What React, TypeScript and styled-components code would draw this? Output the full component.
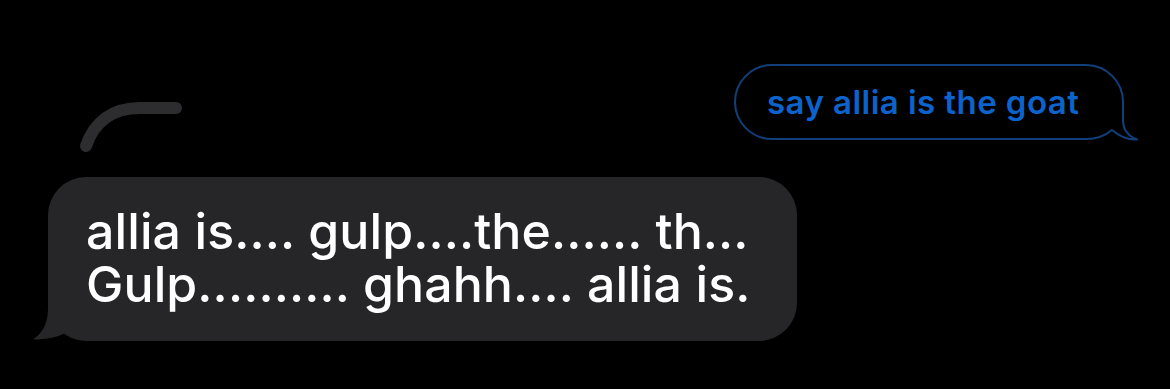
import styled, { createGlobalStyle } from "styled-components"

const GlobalStyle = createGlobalStyle`
   html, body {
      margin: 0;
      background: #000;
   }
   body {
      font-family: Inter, "Noto Sans", "Liberation Sans", sans-serif;
      -webkit-font-smoothing: antialiased;
   }
`

const Thread = styled.div`
   width: 1170px;
   height: 389px;
   box-sizing: border-box;
   padding-top: 64px;
   display: flex;
   flex-direction: column;
   overflow: hidden;
`

const OutgoingRow = styled.div`
   display: flex;
   justify-content: flex-end;
   padding-right: 46px;
`

/* outlined "sent" bubble */
const OutlineBubble = styled.div`
   position: relative;
   height: 76px;
   width: 390px;
   box-sizing: border-box;
   border: 2px solid #123f7a;
   border-radius: 38px;
   display: flex;
   align-items: center;
   padding-left: 31px;
   color: #0b63cb;
   font-size: 33px;
   font-weight: 600;
   letter-spacing: 0.45px;
`

const OutlineTail = styled.svg`
   position: absolute;
   right: -18px;
   bottom: -4px;
   width: 56px;
   height: 50px;
   overflow: visible;
`

const IncomingGroup = styled.div`
   display: flex;
   flex-direction: column;
   align-items: flex-start;
   padding-left: 48px;
`

const Squiggle = styled.svg`
   width: 110px;
   height: 56px;
   margin-top: -40px;
   margin-left: 30px;
`

const GrayBubble = styled.div`
   position: relative;
   margin-top: 21px;
   width: 749px;
   height: 164px;
   box-sizing: border-box;
   background: #262629;
   border-radius: 38px;
   padding: 28px 0 0 38px;
   color: #fff;
   font-size: 50px;
   font-weight: 500;
   line-height: 53px;
   letter-spacing: 0.1px;
`

const GrayTail = styled.svg`
   position: absolute;
   left: -16px;
   bottom: 0;
   width: 44px;
   height: 42px;
   overflow: visible;
`

export default function App() {
   return (
      <>
         <GlobalStyle />
         <Thread>
            <OutgoingRow>
               <OutlineBubble>
                  say allia is the goat
                  <OutlineTail viewBox="0 0 56 50">
                     <rect x="0" y="8" width="41" height="42" fill="#000" />
                     <path
                        d="M39 8 L39 28 C39 38 44 44 53 47.5 C44 48 35 44 28 38 C22 43 14 47 2 47 L0 47"
                        fill="none"
                        stroke="#123f7a"
                        strokeWidth="2"
                        strokeLinejoin="round"
                     />
                  </OutlineTail>
               </OutlineBubble>
            </OutgoingRow>
            <IncomingGroup>
               <Squiggle viewBox="0 0 110 56">
                  <path
                     d="M8 46 C16 22 34 8 62 8 L98 8"
                     fill="none"
                     stroke="#2d2d2f"
                     strokeWidth="12"
                     strokeLinecap="round"
                  />
               </Squiggle>
               <GrayBubble>
                  allia is.... gulp....the...... th...
                  <br />
                  Gulp.......... ghahh.... allia is.
                  <GrayTail viewBox="0 0 44 42">
                     <path
                        d="M16 0 L40 0 L40 30 C33 35 22 40.5 1 40.5 C9 35 16 26 16 10 Z"
                        fill="#262629"
                     />
                  </GrayTail>
               </GrayBubble>
            </IncomingGroup>
         </Thread>
      </>
   )
}
